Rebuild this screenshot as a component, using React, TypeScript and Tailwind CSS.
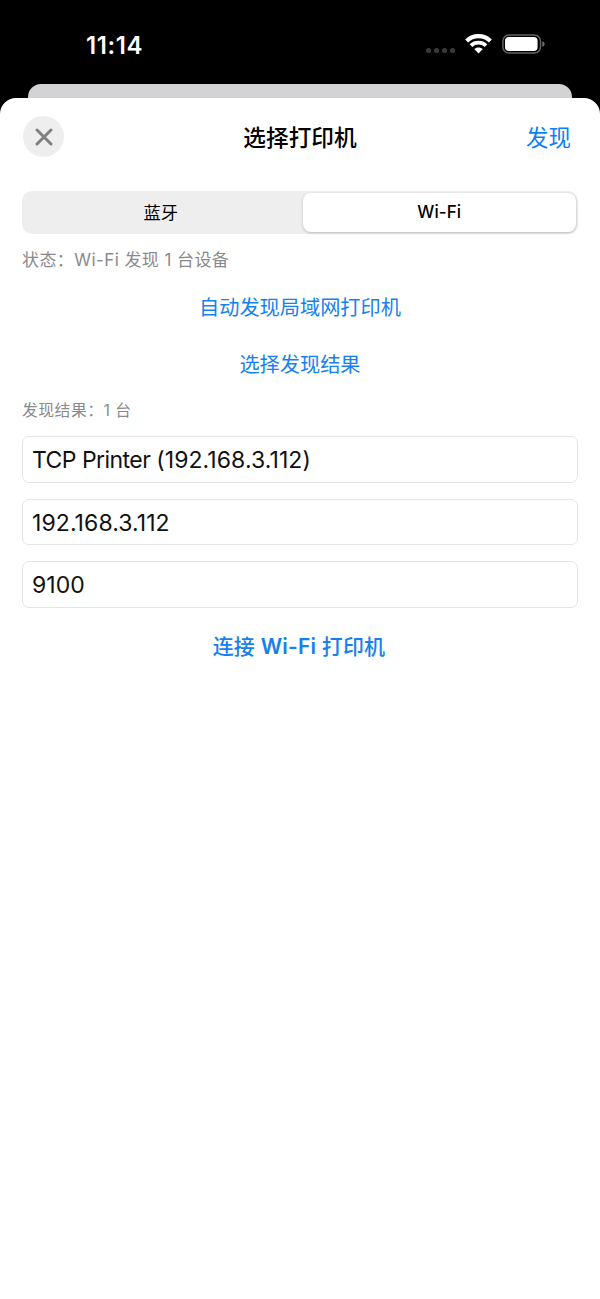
import React from 'react';

const fields = [
  { label: 'TCP Printer', prefix: 'TCP Printer ', value: '(192.168.3.112)' },
  { label: 'IP', prefix: '', value: '192.168.3.112' },
  { label: 'Port', prefix: '', value: '9100' },
];

const StatusBar: React.FC = () => (
  <div className="flex h-[84px] items-start justify-between pl-[86px] pr-[55px] text-white">
    <span className="mt-[29px] text-[24px] font-semibold leading-[33px] tracking-[0.6px]">11:14</span>
    <div className="mt-[34px] flex items-start">
      <div className="mt-[14px] flex gap-[3px]">
        {[0, 1, 2, 3].map((dot) => (
          <span key={dot} className="size-[5px] rounded-full bg-[#3c3c3d]" />
        ))}
      </div>
      <svg className="ml-[10px] h-5 w-[27px]" viewBox="0 0 27 20" fill="none" stroke="currentColor">
        <path d="M1.6 7C8.2 0.5 18.8 0.5 25.4 7" strokeWidth="4.2" />
        <path d="M6 11.6C10 7.7 17 7.7 21 11.6" strokeWidth="3.8" />
        <path d="M13.5 19.4 9.2 15.1C11.5 12.8 15.5 12.8 17.8 15.1Z" fill="currentColor" stroke="none" />
      </svg>
      <svg className="ml-[10px] h-5 w-[43px]" viewBox="0 0 43 20">
        <rect x="0.9" y="0.9" width="37.6" height="18.2" rx="6" fill="none" stroke="#626262" strokeWidth="1.5" />
        <rect x="3" y="3" width="32.6" height="14" rx="4" fill="#fff" />
        <path d="M40.3 7.3C43.4 8.2 43.4 12 40.3 12.9Z" fill="#727272" />
      </svg>
    </div>
  </div>
);

const App: React.FC = () => {
  return (
    <div className="flex h-[1299px] w-[600px] flex-col overflow-hidden bg-black font-[Inter,'Noto_Sans_CJK_SC',sans-serif] text-black">
      <StatusBar />
      <div className="mx-7 h-[14px] shrink-0 rounded-t-[13px] bg-[#d3d3d6]" />
      <main className="flex-1 rounded-t-[16px] bg-white px-[22px]">
        <header className="grid h-[93px] grid-cols-3 items-start pt-[18px]">
          <button
            aria-label="关闭"
            className="ml-[1px] flex size-[41px] items-center justify-center rounded-full bg-[#eeeeef] text-[#7f7f82]"
          >
            <svg className="size-[18px]" viewBox="0 0 18 18" stroke="currentColor" strokeWidth="2.9" strokeLinecap="round">
              <path d="M2 2 16 16M16 2 2 16" />
            </svg>
          </button>
          <h1 className="text-center text-[22.7px] font-medium leading-[43px]">选择打印机</h1>
          <button className="justify-self-end pr-[7px] text-[22.5px] leading-[43px] text-[#0b7ff5]">发现</button>
        </header>

        <div className="flex h-[43px] rounded-[10px] bg-[#eeeeee] p-[2px]">
          <button className="flex-1 pt-px pr-px text-[17.3px]">蓝牙</button>
          <button className="ml-[4px] flex-1 rounded-[8px] bg-white pt-px text-[17px] font-medium tracking-[0.1px] shadow-[0_1px_3px_rgba(0,0,0,0.22)]">
            Wi-Fi
          </button>
        </div>

        <p className="mt-[13px] text-[17px] leading-[26px] tracking-[0.42px] text-[#8a8a8e]">
          状态：Wi-Fi 发现 1 台设备
        </p>

        <div className="mt-[19px] flex flex-col items-center gap-[25px] text-[20.2px] leading-8 text-[#1681ed]">
          <button>自动发现局域网打印机</button>
          <button>选择发现结果</button>
        </div>

        <p className="mt-[18px] text-[15.8px] leading-6 tracking-[0.5px] text-[#8a8a8e]">发现结果：1 台</p>

        <div className="mt-[13px] flex flex-col gap-4">
          {fields.map((field) => (
            <div
              key={field.label}
              className="flex h-[46.5px] items-center whitespace-pre rounded-[7px] border border-[#e5e5e5] px-[9px] pt-[2px] text-[23px] text-[#111]"
            >
              <span className="tracking-[-0.55px]">{field.prefix}</span>
              <span className="tracking-[0.08px]">{field.value}</span>
            </div>
          ))}
        </div>

        <button className="mt-[22px] block w-full pr-[2px] text-center text-[21px] font-medium leading-[33px] tracking-[0.15px] text-[#1681ed]">
          连接 <span className="font-semibold">Wi-Fi</span> 打印机
        </button>
      </main>
    </div>
  );
};

export default App;
